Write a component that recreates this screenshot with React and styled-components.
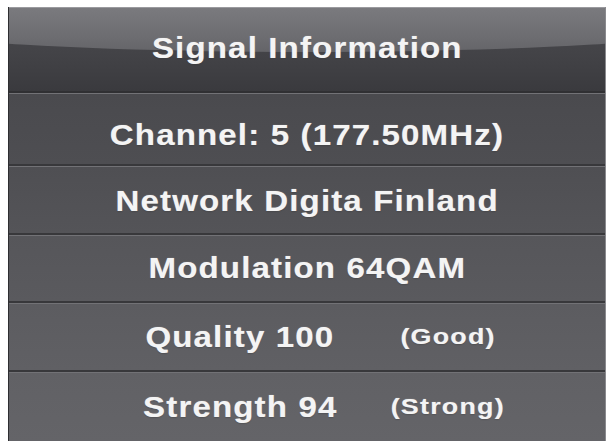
import React from "react";
import styled, { createGlobalStyle } from "styled-components";

const Global = createGlobalStyle`
  html, body { margin: 0; padding: 0; background: #ffffff; }
  body { font-family: "Liberation Sans", Arial, sans-serif; }
`;

const Page = styled.div`
  width: 609px;
  height: 443px;
  padding: 7px 3px 2px 8px;
  box-sizing: border-box;
  background: #fff;
`;

const Panel = styled.div`
  display: flex;
  flex-direction: column;
  height: 434px;
  background: #545458;
  border-left: 1px solid #2e2e31;
  border-right: 1px solid #8a8a8e;
  box-shadow: inset 0 -1px 0 #3a3a3d;
  overflow: hidden;
`;

const Header = styled.div`
  position: relative;
  height: 86px;
  flex: none;
  display: flex;
  align-items: center;
  justify-content: center;
  background: linear-gradient(#4a4a4e 0%, #434347 55%, #3a3a3e 100%);
  border-top: 1px solid #9a9a9e;
  border-bottom: 2px solid #303033;
  box-sizing: border-box;
  overflow: hidden;
  &::before {
    content: "";
    position: absolute;
    left: -36%;
    right: -36%;
    top: -44px;
    height: 88px;
    border-radius: 50%;
    background: linear-gradient(#808084 0%, #7a7a7e 50%, #6c6c70 85%, #646468 100%);
  }
`;

const Row = styled.div`
  height: ${(p) => p.$h}px;
  flex: none;
  box-sizing: border-box;
  display: flex;
  align-items: center;
  justify-content: center;
  background: linear-gradient(${(p) => p.$top}, ${(p) => p.$bottom});
  border-top: 1px solid #727276;
  border-bottom: 2px solid #38383b;
  &:last-child { border-bottom: none; }
`;

const SplitRow = styled(Row)`
  display: grid;
  grid-template-columns: 240px 176px;
  justify-content: start;
  padding-left: 111px;
  & > * { justify-self: center; }
`;

const Label = styled.span`
  position: relative;
  display: inline-block;
  color: #f4f4f4;
  font-family: "Liberation Sans", Arial, sans-serif;
  font-weight: 700;
  font-size: ${(p) => (p.$small ? 22 : 29)}px;
  letter-spacing: 1px;
  transform: scaleX(${(p) => (p.$small ? 1.22 : 1.14)});
  white-space: nowrap;
  text-shadow: 0 0 1px rgba(255, 255, 255, 0.5), 0 1px 1px rgba(0, 0, 0, 0.25);
  margin-top: ${(p) => p.$dy || 0}px;
`;

export default function App() {
  return (
    <>
      <Global />
      <Page>
        <Panel>
          <Header>
            <Label $dy={-2}>Signal Information</Label>
          </Header>
          <Row $h={73} $top="#4a4a4e" $bottom="#4e4e52">
            <Label $dy={12}>Channel: 5 (177.50MHz)</Label>
          </Row>
          <Row $h={69} $top="#4f4f53" $bottom="#545458">
            <Label $dy={2}>Network Digita Finland</Label>
          </Row>
          <Row $h={68} $top="#56565a" $bottom="#5a5a5e">
            <Label>Modulation 64QAM</Label>
          </Row>
          <SplitRow $h={69} $top="#5c5c60" $bottom="#606064">
            <Label>Quality 100</Label>
            <Label $small>(Good)</Label>
          </SplitRow>
          <SplitRow $h={69} $top="#616165" $bottom="#646468">
            <Label>Strength 94</Label>
            <Label $small>(Strong)</Label>
          </SplitRow>
        </Panel>
      </Page>
    </>
  );
}
